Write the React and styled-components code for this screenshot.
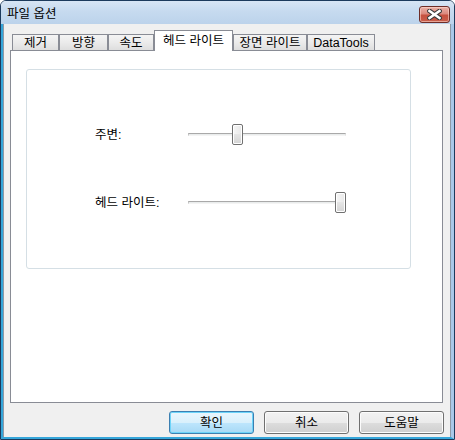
import React from "react";
import styled, { createGlobalStyle } from "styled-components";

const Global = createGlobalStyle`
  html, body { margin: 0; padding: 0; background: #ffffff; }
  #root { width: 455px; height: 440px; }
  * { box-sizing: border-box; }
`;

const FONT = `"Liberation Sans", "Noto Sans CJK KR", sans-serif`;

const Window = styled.div`
  width: 455px;
  height: 440px;
  display: flex;
  flex-direction: column;
  border: 1px solid #1c3a5c;
  border-radius: 6px 6px 0 0;
  overflow: hidden;
  font-family: ${FONT};
  font-size: 12px;
  color: #000;
`;

const TitleBar = styled.div`
  height: 23px;
  flex: none;
  display: flex;
  align-items: center;
  justify-content: space-between;
  padding: 0 4px 0 6px;
  background: linear-gradient(#d7e5f4 0%, #c6daef 45%, #bcd3eb 100%);
`;

const Title = styled.span`
  font-size: 12.5px;
  line-height: 14px;
  margin-top: 3px;
  color: #000;
`;

const CloseButton = styled.div`
  width: 31px;
  height: 17px;
  margin-top: 3px;
  border: 1px solid #6e2d27;
  border-radius: 3px;
  display: flex;
  align-items: center;
  justify-content: center;
  background: linear-gradient(#eab1a8 0%, #dc8a7e 45%, #c6513f 55%, #c95e4c 100%);
  box-shadow: inset 0 0 0 1px rgba(255, 220, 210, 0.55);
`;

const Frame = styled.div`
  flex: 1;
  display: flex;
  border-left: 2px solid #35a6da;
  border-bottom: 2px solid #35a6da;
  border-right: 3px solid #a9c8e8;
`;

const Client = styled.div`
  flex: 1;
  display: flex;
  flex-direction: column;
  background: #f0f0f0;
  border-left: 1px solid #8e99a6;
  border-right: 1px solid #8e99a6;
  padding: 6px 7px 3px 6px;
`;

const TabList = styled.div`
  height: 21px;
  margin-bottom: -1px;
  padding-left: 2px;
  display: flex;
  align-items: flex-end;
  position: relative;
  z-index: 1;
`;

const Tab = styled.div`
  width: ${(p) => p.$w}px;
  height: ${(p) => (p.$active ? 21 : 17)}px;
  flex: none;
  display: flex;
  align-items: center;
  justify-content: center;
  border: 1px solid #898c95;
  border-bottom: ${(p) => (p.$active ? "none" : "1px solid #898c95")};
  background: ${(p) =>
    p.$active ? "#ffffff" : "linear-gradient(#f4f4f4 0%, #ebebeb 50%, #dedede 100%)"};
  font-size: 12.5px;
  line-height: 14px;
  padding-top: ${(p) => (p.$active ? 0 : 1)}px;
  white-space: nowrap;
`;

const Panel = styled.div`
  height: 353px;
  flex: none;
  background: #ffffff;
  border: 1px solid #898c95;
  padding: 18px 0 0 15px;
`;

const Group = styled.div`
  width: 385px;
  height: 200px;
  border: 1px solid #d5dfe5;
  border-radius: 3px;
  padding: 54px 0 0 68px;
  display: grid;
  grid-template-columns: 93px 158px;
  grid-auto-rows: 21px;
  row-gap: 47px;
  align-items: center;
`;

const Label = styled.span`
  font-size: 12.5px;
  line-height: 14px;
  white-space: nowrap;
`;

const Slider = styled.div`
  position: relative;
  width: 158px;
  height: 21px;
  display: flex;
  align-items: center;
`;

const Track = styled.div`
  width: 100%;
  height: 3px;
  border-top: 1px solid #a9a9a9;
  border-left: 1px solid #c4c4c4;
  border-right: 1px solid #e0e0e0;
  background: #e9ecec;
  border-bottom: 1px solid #f4f4f4;
`;

const Thumb = styled.div`
  position: absolute;
  top: 0;
  width: 11px;
  height: 21px;
  border: 1px solid #707070;
  border-radius: 2px;
  background: linear-gradient(90deg, #f6f6f6 0%, #e8e8e8 100%);
  box-shadow: inset 0 0 0 1px #ffffff;
  &::after {
    content: "";
    position: absolute;
    left: 1px;
    right: 1px;
    top: 9px;
    bottom: 1px;
    background: linear-gradient(#e6e6e6, #d6d6d6);
  }
`;

const ButtonRow = styled.div`
  margin-top: 8px;
  margin-right: -1px;
  display: flex;
  justify-content: flex-end;
  gap: 10px;
`;

const Button = styled.div`
  width: 85px;
  height: 23px;
  display: flex;
  align-items: center;
  justify-content: center;
  border-radius: 3px;
  border: 1px solid ${(p) => (p.$default ? "#3c7fb1" : "#707070")};
  background: ${(p) =>
    p.$default
      ? "linear-gradient(#eaf6fd 0%, #d9f0fc 50%, #bee6fd 51%, #a7d9f5 100%)"
      : "linear-gradient(#f2f2f2 0%, #ebebeb 50%, #dddddd 51%, #cfcfcf 100%)"};
  box-shadow: inset 0 0 0 1px ${(p) => (p.$default ? "#6dd4f9" : "#fcfcfc")};
  font-size: 12.5px;
  line-height: 14px;
`;

const tabs = [
  { label: "제거", w: 47 },
  { label: "방향", w: 49 },
  { label: "속도", w: 46 },
  { label: "헤드 라이트", w: 79, active: true },
  { label: "장면 라이트", w: 74 },
  { label: "DataTools", w: 68 },
];

const sliders = [
  { label: "주변:", value: 0.297 },
  { label: "헤드 라이트:", value: 1 },
];

function CloseGlyph() {
  return (
    <svg width="15" height="11" viewBox="0 0 15 11">
      <path d="M2.5 2 L12.5 9 M12.5 2 L2.5 9" stroke="#3b3b3b" strokeWidth="4.6" strokeLinecap="square" />
      <path d="M2.5 2 L12.5 9 M12.5 2 L2.5 9" stroke="#ffffff" strokeWidth="2.6" strokeLinecap="square" />
    </svg>
  );
}

export default function App() {
  return (
    <>
      <Global />
      <Window>
        <TitleBar>
          <Title>파일 옵션</Title>
          <CloseButton>
            <CloseGlyph />
          </CloseButton>
        </TitleBar>
        <Frame>
          <Client>
            <TabList>
              {tabs.map((t) => (
                <Tab key={t.label} $w={t.w} $active={t.active}>
                  {t.label}
                </Tab>
              ))}
            </TabList>
            <Panel>
              <Group>
                {sliders.map((s) => (
                  <React.Fragment key={s.label}>
                    <Label>{s.label}</Label>
                    <Slider>
                      <Track />
                      <Thumb style={{ left: `${Math.round(s.value * 147)}px` }} />
                    </Slider>
                  </React.Fragment>
                ))}
              </Group>
            </Panel>
            <ButtonRow>
              <Button $default>확인</Button>
              <Button>취소</Button>
              <Button>도움말</Button>
            </ButtonRow>
          </Client>
        </Frame>
      </Window>
    </>
  );
}
